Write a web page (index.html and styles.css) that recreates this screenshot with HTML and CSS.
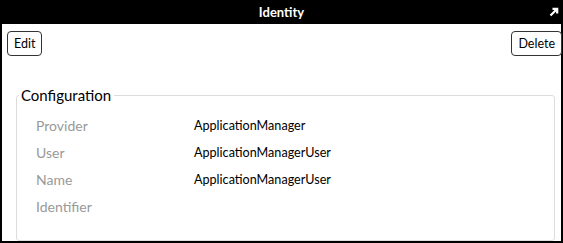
FILE: index.html
```html
<!DOCTYPE html>
<html>
<head>
<meta charset="utf-8">
<link rel="stylesheet" href="styles.css">
</head>
<body>
<div class="panel">
  <div class="header">
    <span class="title">Identity</span>
    <svg class="pop" width="10" height="10" viewBox="0 0 10 10"><path d="M1.5 8.5 L8 2 M3.5 1.8 H8.2 V6.5" stroke="#fff" stroke-width="2.2" fill="none"/></svg>
  </div>
  <div class="toolbar">
    <button class="btn">Edit</button>
    <button class="btn">Delete</button>
  </div>
  <fieldset class="group">
    <legend>Configuration</legend>
    <div class="grid">
      <div class="label">Provider</div><div class="value">ApplicationManager</div>
      <div class="label">User</div><div class="value">ApplicationManagerUser</div>
      <div class="label">Name</div><div class="value">ApplicationManagerUser</div>
      <div class="label">Identifier</div><div class="value"></div>
    </div>
  </fieldset>
</div>
</body>
</html>
```
FILE: styles.css
```css
* { box-sizing: border-box; }
html, body { margin: 0; padding: 0; background: #fff; }
body { font-family: Lato, "Liberation Sans", sans-serif; }
.panel {
  width: 563px;
  height: 243px;
  border: 2px solid #000;
  border-top: 0;
  display: flex;
  flex-direction: column;
}
.header {
  height: 24px;
  background: #000;
  color: #fff;
  display: flex;
  align-items: center;
  justify-content: center;
  position: relative;
  margin: 0 -2px;
}
.title { font-size: 13px; font-weight: bold; }
.pop { position: absolute; right: 4px; top: 7px; }
.toolbar {
  display: flex;
  justify-content: space-between;
  padding: 7px 0 0 5px;
}
.btn {
  height: 25px;
  padding: 0 6px;
  background: #fff;
  border: 1px solid #333;
  border-radius: 4px;
  font-family: inherit;
  font-size: 12.5px;
  color: #000;
}
.btn:last-child { margin-right: -1px; }
.group {
  margin: 30px 6px 0 14px;
  border: 1px solid #ddd;
  border-radius: 3px;
  padding: 8px 0 0 19px;
  flex: 1;
  min-height: 0;
}
.group legend {
  font-size: 15px;
  padding: 0 3px 0 2px;
  margin-left: -17px;
  color: #000;
}
.grid {
  display: grid;
  grid-template-columns: 158px 1fr;
  grid-auto-rows: 27px;
  align-items: center;
}
.label { color: #999; font-size: 14px; }
.value { color: #000; font-size: 12.6px; }
```
